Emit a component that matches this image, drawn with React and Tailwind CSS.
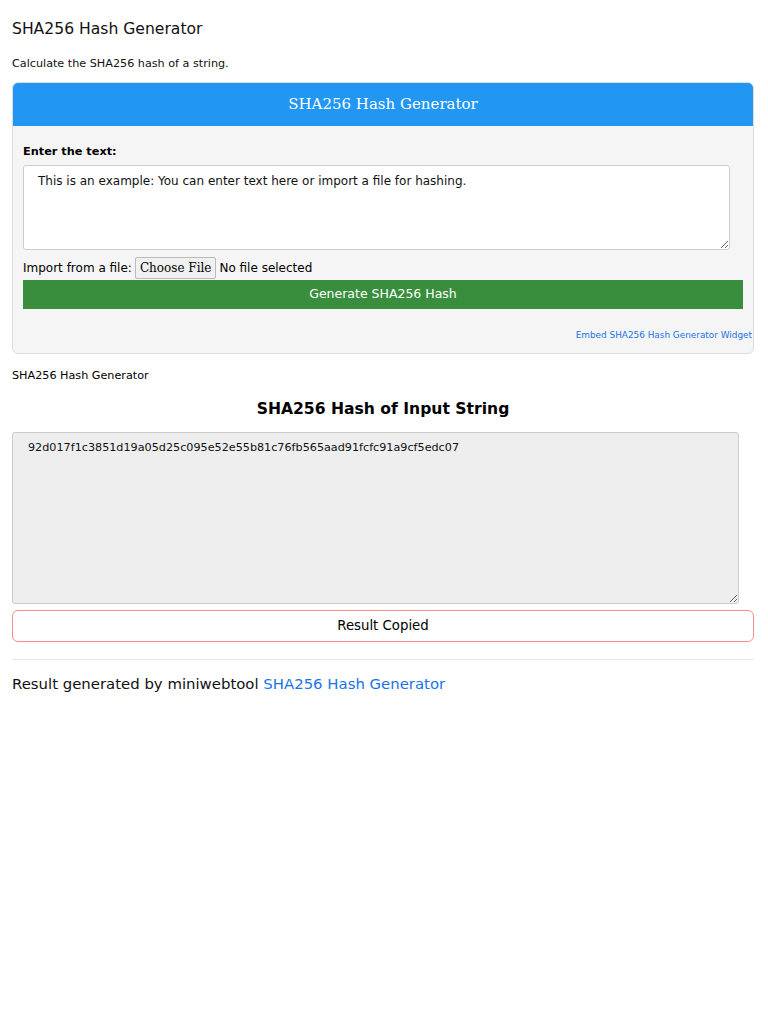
export default function App() {
  const hash = '92d017f1c3851d19a05d25c095e52e55b81c76fb565aad91fcfc91a9cf5edc07';
  return (
    <div className="bg-white text-black px-3 font-['DejaVu_Sans',sans-serif] min-h-[1024px]">
      <h1 className="pt-[19px] text-[15.6px] leading-[20px] text-[#111]">SHA256 Hash Generator</h1>
      <p className="mt-[18px] text-[11.2px] leading-[14px] text-[#111]">Calculate the SHA256 hash of a string.</p>

      {/* tool card */}
      <div className="mt-[11px] w-[742px] rounded-[6px] border border-[#ddd] bg-[#f5f5f5] overflow-hidden">
        <div className="h-[43px] bg-[#2196f3] flex items-center justify-center text-white text-[15px] font-['DejaVu_Serif',serif]">
          SHA256 Hash Generator
        </div>
        <div className="px-[10px] pt-[19px] pb-[12px]">
          <label className="block text-[11.3px] leading-[14px] font-bold">Enter the text:</label>
          <textarea
            className="mt-[6px] block w-[707px] h-[85px] bg-white border border-[#ccc] rounded-[3px] px-[14px] py-[8px] text-[12px] leading-[15px] text-[#111] resize-y"
            defaultValue="This is an example: You can enter text here or import a file for hashing."
          />
          <div className="mt-[7px] flex items-center h-[22px] text-[12px]">
            <span>Import from a file:</span>
            <button className="ml-[3px] h-[22px] px-[4px] border border-[#bbb] rounded-[2px] bg-[#f0f0f0] font-['DejaVu_Serif',serif] text-[12px]">Choose File</button>
            <span className="ml-[3px]">No file selected</span>
          </div>
          <button className="mt-[1px] w-[720px] h-[29px] bg-[#388e3c] text-white text-[12.5px] flex items-center justify-center">
            Generate SHA256 Hash
          </button>
          <div className="mt-[20px] flex justify-end -mr-[9px]">
            <a href="#" className="text-[8.9px] leading-[12px] text-[#1a73e8]">Embed SHA256 Hash Generator Widget</a>
          </div>
        </div>
      </div>

      <p className="mt-[15px] text-[11.2px] leading-[14px]">SHA256 Hash Generator</p>
      <h2 className="mt-[16px] text-center w-[742px] text-[15.6px] leading-[20px] font-bold">SHA256 Hash of Input String</h2>
      <textarea
        readOnly
        className="mt-[13px] block w-[727px] h-[172px] bg-[#eee] border border-[#ccc] rounded-[3px] px-[15px] py-[8px] text-[11.2px] leading-[14px] text-[#111] resize-y"
        defaultValue={hash}
      />
      <div className="mt-[6px] w-[742px] h-[32px] rounded-[6px] border border-[#f88] bg-white flex items-center justify-center text-[13.3px]">
        Result Copied
      </div>
      <div className="mt-[17px] w-[742px] border-t border-[#e6e6e6]" />
      <p className="mt-[15px] text-[14.9px] leading-[18px] text-[#111]">
        Result generated by miniwebtool <a href="#" className="text-[#1a73e8]">SHA256 Hash Generator</a>
      </p>
    </div>
  );
}
